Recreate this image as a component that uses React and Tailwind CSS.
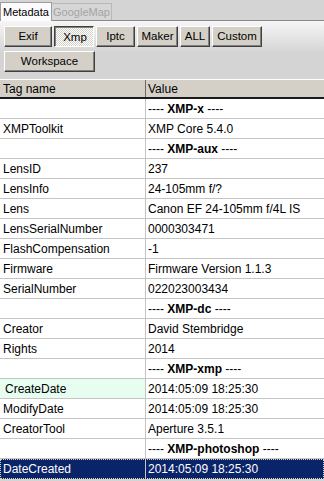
import React from 'react';

const rows = [
  { section: 'XMP-x' },
  { tag: 'XMPToolkit', value: 'XMP Core 5.4.0' },
  { section: 'XMP-aux' },
  { tag: 'LensID', value: '237' },
  { tag: 'LensInfo', value: '24-105mm f/?' },
  { tag: 'Lens', value: 'Canon EF 24-105mm f/4L IS' },
  { tag: 'LensSerialNumber', value: '0000303471' },
  { tag: 'FlashCompensation', value: '-1' },
  { tag: 'Firmware', value: 'Firmware Version 1.1.3' },
  { tag: 'SerialNumber', value: '022023003434' },
  { section: 'XMP-dc' },
  { tag: 'Creator', value: 'David Stembridge' },
  { tag: 'Rights', value: '2014' },
  { section: 'XMP-xmp' },
  { tag: 'CreateDate', value: '2014:05:09 18:25:30', hover: true },
  { tag: 'ModifyDate', value: '2014:05:09 18:25:30' },
  { tag: 'CreatorTool', value: 'Aperture 3.5.1' },
  { section: 'XMP-photoshop' },
  { tag: 'DateCreated', value: '2014:05:09 18:25:30', selected: true },
];

const buttons = [
  { label: 'Exif', w: 'w-[48px]' },
  { label: 'Xmp', w: 'w-[40px]', pressed: true },
  { label: 'Iptc', w: 'w-[39px]' },
  { label: 'Maker', w: 'w-[41px]' },
  { label: 'ALL', w: 'w-[30px]' },
  { label: 'Custom', w: 'w-[50px]' },
];

const raised =
  'border border-t-white border-l-white border-r-[#404040] border-b-[#404040] bg-[#d4d0c8] shadow-[inset_-1px_-1px_0_#808080]';
const sunken =
  'border border-t-[#404040] border-l-[#404040] border-r-white border-b-white shadow-[inset_1px_1px_0_#808080] bg-[repeating-conic-gradient(#ffffff_0_25%,#d4d0c8_0_50%)] bg-[length:2px_2px]';

const Btn = ({ label, w, pressed }) => (
  <div
    className={`${w} h-[21px] flex items-center justify-center text-[11.5px] text-black whitespace-nowrap ${pressed ? sunken + ' pt-[2px] pl-[2px]' : raised}`}
  >
    {label}
  </div>
);

const App = () => {
  return (
    <div className="w-[324px] h-[481px] overflow-hidden bg-[#d4d4d4] font-['Liberation_Sans',Arial,sans-serif] text-[12px] text-black leading-none">
      {/* tabs */}
      <div className="flex items-end h-[20px] text-[11px] whitespace-nowrap">
        <div className="h-[19px] w-[52px] bg-[#fbfbfd] border border-b-0 border-[#9c9c9c] flex items-center pl-[2px] relative top-[1px] z-10">
          Metadata
        </div>
        <div className="h-[17px] w-[60px] bg-[#d6d6d6] border border-b-0 border-[#b8b8b8] border-l-0 flex items-center justify-center text-[#a4a4a4]">
          GoogleMap
        </div>
      </div>

      {/* toolbar panel */}
      <div className="border-t border-[#8a8a8a] bg-[linear-gradient(#f6f6f6,#d4d4d4_32px)] h-[59px] pl-[4px] pt-[5px] flex flex-col gap-[4px]">
        <div className="flex gap-[2px]">
          {buttons.map((b) => (
            <Btn key={b.label} {...b} />
          ))}
        </div>
        <div className={`w-[91px] h-[21px] flex items-center justify-center text-[11.5px] ${raised}`}>Workspace</div>
      </div>

      {/* grid */}
      <div className="border-t border-white">
        <div className="flex h-[19px] bg-[#d4d0c8] border-b-2 border-[#1a1a1a]">
          <div className="w-[146px] border-r border-[#6a6a6a] flex items-center pl-[3px]">Tag name</div>
          <div className="flex-1 flex items-center pl-[2px]">Value</div>
        </div>
        {rows.map((r, i) =>
          r.section ? (
            <div key={i} className="flex h-[20px] bg-white border-b border-[#c4c4c4]">
              <div className="w-[146px] border-r border-[#c4c4c4]" />
              <div className="flex-1 flex items-center pl-[2px] font-bold">
                <span className="font-normal">----&nbsp;</span>
                {r.section}
                <span className="font-normal">&nbsp;----</span>
              </div>
            </div>
          ) : r.selected ? (
            <div key={i} className="flex h-[20px] bg-[#0a246a] text-white border border-dotted border-[#d8d8b0]">
              <div className="w-[145px] border-r border-[#c4c4c4] flex items-center pl-[2px]">{r.tag}</div>
              <div className="flex-1 flex items-center pl-[2px]">{r.value}</div>
            </div>
          ) : (
            <div key={i} className="flex h-[20px] bg-white border-b border-[#c4c4c4]">
              <div
                className={`w-[146px] border-r border-[#c4c4c4] flex items-center ${r.hover ? 'bg-[#e6fdef] pl-[5px]' : 'pl-[3px]'}`}
              >
                {r.tag}
              </div>
              <div className="flex-1 flex items-center pl-[2px]">{r.value}</div>
            </div>
          )
        )}
      </div>
    </div>
  );
};

export default App;
